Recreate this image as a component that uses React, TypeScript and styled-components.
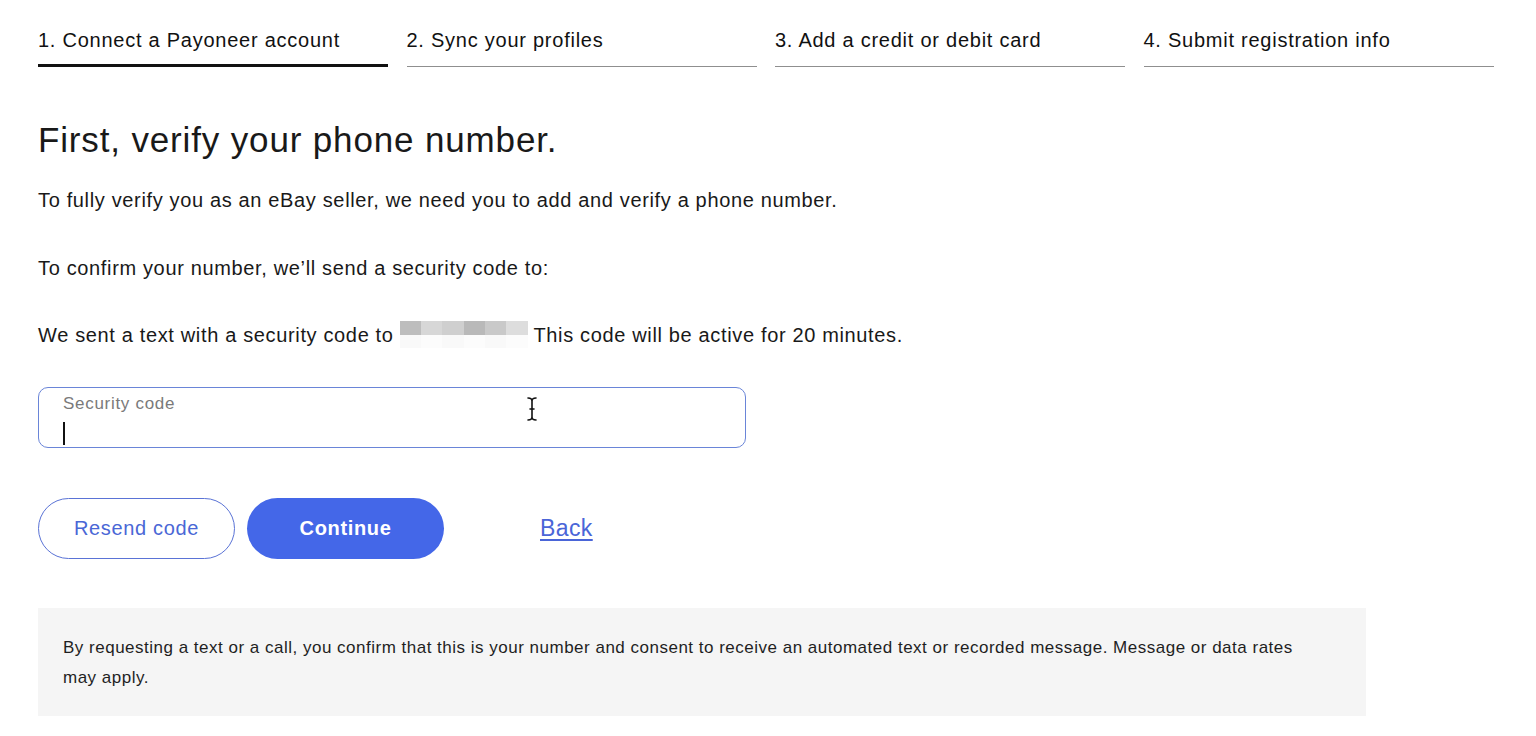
import styled, { createGlobalStyle } from "styled-components"

const GlobalStyle = createGlobalStyle`
    body {
        margin: 0;
        background: #ffffff;
        font-family: "Liberation Sans", Arial, Helvetica, sans-serif;
        color: #191919;
    }
`

const steps = [
    "1. Connect a Payoneer account",
    "2. Sync your profiles",
    "3. Add a credit or debit card",
    "4. Submit registration info",
]

const redacted = ["#bdbdbd", "#d7d7d7", "#cfcfcf", "#b9b9b9", "#c9c9c9", "#dddddd"]

export default function App() {
    return (
        <>
            <GlobalStyle />
            <Page>
                <Steps>
                    {steps.map((step, i) => (
                        <Step key={step}>
                            <StepLabel>{step}</StepLabel>
                            <StepBar $active={i === 0} />
                        </Step>
                    ))}
                </Steps>

                <Title>First, verify your phone number.</Title>
                <Text $gap={26}>To fully verify you as an eBay seller, we need you to add and verify a phone number.</Text>
                <Text $gap={40}>To confirm your number, we’ll send a security code to:</Text>
                <Text $gap={39}>
                    We sent a text with a security code to{" "}
                    <Redacted aria-label="hidden phone number">
                        <RedactedRow>
                            {redacted.map((c, i) => (
                                <Pixel key={i} style={{ background: c }} />
                            ))}
                        </RedactedRow>
                        <RedactedRow>
                            {redacted.map((_, i) => (
                                <Pixel key={i} style={{ background: i % 2 ? "#fcfcfc" : "#f9f9f9" }} />
                            ))}
                        </RedactedRow>
                    </Redacted>{" "}
                    This code will be active for 20 minutes.
                </Text>

                <Field>
                    <FieldLabel>Security code</FieldLabel>
                    <Caret />
                    <Pointer width="12" height="26" viewBox="0 0 12 26">
                        <path
                            d="M2 2 Q6 2 6 5 Q6 2 10 2 M6 5 V21 M2 24 Q6 24 6 21 Q6 24 10 24 M4 13 H8"
                            fill="none"
                            stroke="#ffffff"
                            strokeWidth="3.5"
                            strokeLinecap="round"
                        />
                        <path
                            d="M2 2 Q6 2 6 5 Q6 2 10 2 M6 5 V21 M2 24 Q6 24 6 21 Q6 24 10 24 M4 13 H8"
                            fill="none"
                            stroke="#111111"
                            strokeWidth="1.6"
                            strokeLinecap="round"
                        />
                    </Pointer>
                </Field>

                <Actions>
                    <OutlineButton>Resend code</OutlineButton>
                    <PrimaryButton>Continue</PrimaryButton>
                    <BackLink href="#">Back</BackLink>
                </Actions>

                <Notice>
                    By requesting a text or a call, you confirm that this is your number and consent to receive an
                    automated text or recorded message. Message or data rates may apply.
                </Notice>
            </Page>
        </>
    )
}

const Page = styled.main`
    padding: 0 42px 20px 38px;
    display: flex;
    flex-direction: column;
    align-items: flex-start;
`
const Steps = styled.nav`
    display: grid;
    grid-template-columns: repeat(4, 350px);
    column-gap: 18.5px;
    padding-top: 28px;
`
const Step = styled.div`
    display: flex;
    flex-direction: column;
`
const StepLabel = styled.span`
    font-size: 20px;
    line-height: 24px;
    letter-spacing: 0.75px;
    color: #111111;
`
const StepBar = styled.span<{ $active: boolean }>`
    display: block;
    margin-top: ${(p) => (p.$active ? "12px" : "14px")};
    height: ${(p) => (p.$active ? "3px" : "1px")};
    background: ${(p) => (p.$active ? "#111111" : "#8f8f8f")};
`
const Title = styled.h1`
    margin: 53px 0 0;
    font-size: 35px;
    line-height: 40px;
    letter-spacing: 0.85px;
    font-weight: 400;
    color: #191919;
`
const Text = styled.p<{ $gap: number }>`
    margin: ${(p) => p.$gap}px 0 0;
    font-size: 20px;
    line-height: 28px;
    letter-spacing: 0.65px;
    color: #191919;
`
const Redacted = styled.span`
    display: inline-flex;
    flex-direction: column;
    vertical-align: top;
`
const RedactedRow = styled.span`
    display: flex;
`
const Pixel = styled.span`
    width: 21.3px;
    height: 13.5px;
`
const Field = styled.div`
    position: relative;
    box-sizing: border-box;
    margin-top: 38px;
    width: 708px;
    height: 61px;
    border: 1.5px solid #6a85d8;
    border-radius: 10px;
    padding: 5px 24px 0;
    display: flex;
    flex-direction: column;
`
const FieldLabel = styled.span`
    font-size: 17px;
    line-height: 22px;
    letter-spacing: 0.7px;
    color: #7a7a7a;
`
const Caret = styled.span`
    margin-top: 7px;
    width: 1.5px;
    height: 23px;
    background: #111111;
`
const Pointer = styled.svg`
    position: absolute;
    left: 487px;
    top: 8px;
`
const Actions = styled.div`
    margin-top: 50px;
    display: flex;
    align-items: center;
    gap: 12px;
`
const OutlineButton = styled.button`
    box-sizing: border-box;
    width: 197px;
    height: 61px;
    border-radius: 31px;
    border: 1.5px solid #5a73d6;
    background: #ffffff;
    color: #4a67d6;
    font-family: "Liberation Sans", Arial, sans-serif;
    font-size: 20px;
    letter-spacing: 0.65px;
    cursor: pointer;
`
const PrimaryButton = styled(OutlineButton)`
    border: none;
    background: #4467e8;
    color: #ffffff;
    font-weight: 700;
`
const BackLink = styled.a`
    margin-left: 84px;
    font-size: 23px;
    letter-spacing: 0.4px;
    color: #4a65d8;
    text-decoration: underline;
    text-underline-offset: 3px;
`
const Notice = styled.p`
    box-sizing: border-box;
    margin: 49px 0 0;
    width: 1328px;
    padding: 25px 40px 23px 25px;
    background: #f5f5f5;
    font-size: 17px;
    line-height: 30px;
    letter-spacing: 0.5px;
    color: #1f1f1f;
`
